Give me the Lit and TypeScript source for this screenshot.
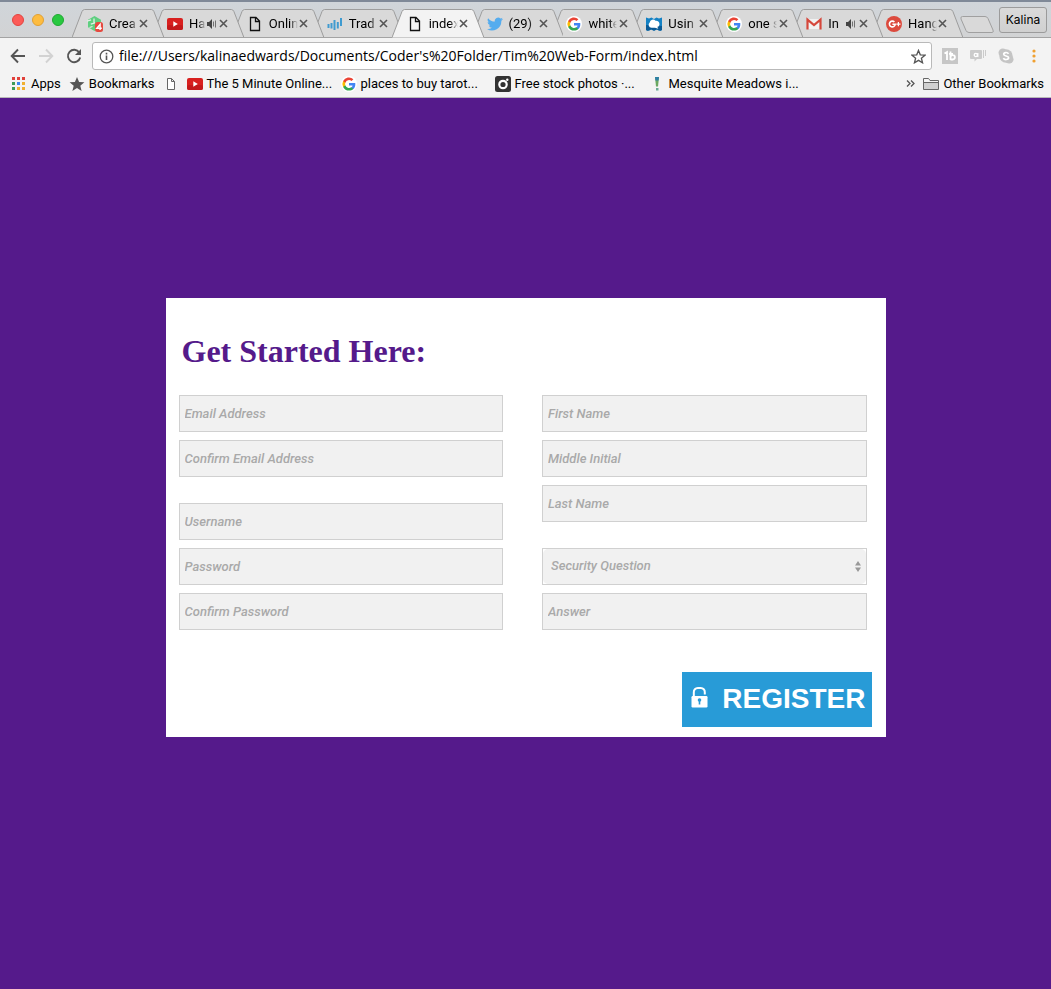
import { LitElement, html, css, svg, nothing, TemplateResult } from "lit";
import { customElement, property } from "lit/decorators.js";
import { classMap } from "lit/directives/class-map.js";

const google = svg`
  <circle cx="8" cy="8" r="8" fill="#fff"/>
  <g transform="translate(1.4 1.4) scale(.55)">
    <path fill="#4285f4" d="M23.5 12.3c0-.8-.1-1.6-.2-2.3H12v4.500h6.500a5.500 5.500 0 0 1-2.400 3.600v3h3.900c2.200-2.100 3.500-5.100 3.500-8.800z"/>
    <path fill="#34a853" d="M12 24c3.200 0 6-1.100 7.900-2.900l-3.900-3a7.200 7.200 0 0 1-10.700-3.800h-4v3.100A12 12 0 0 0 12 24z"/>
    <path fill="#fbbc05" d="M5.300 14.300a7.200 7.200 0 0 1 0-4.600V6.600h-4a12 12 0 0 0 0 10.800z"/>
    <path fill="#ea4335" d="M12 4.800c1.800 0 3.300.6 4.600 1.800L20 3.200A12 12 0 0 0 1.300 6.600l4 3.100A7.200 7.200 0 0 1 12 4.800z"/>
  </g>`;

const page = svg`<path d="M3.500 1.500h5.500l3.500 3.500v9.500h-9z M8.500 1.500v4h4" fill="none" stroke="#111" stroke-width="1.300"/>`;

const icons: Record<string, TemplateResult<2>> = {
  google,
  page,
  pageSmall: svg`<path d="M4.500 2.500h4l3 3v8h-7z M8.500 2.500v3h3" fill="#fff" stroke="#666"/>`,
  youtube: svg`<rect y="2" width="16" height="12" rx="2" fill="#d8201f"/><rect y="9" width="16" height="5" rx="2" fill="#c4191b"/><path d="M6.300 5.300v5.400L10.800 8z" fill="#fff"/>`,
  treehouse: svg`
    <path d="M7.500 0L14 3.700v7.600L7.500 15 1 11.300V3.700z" fill="#5fcf80"/>
    <path d="M0 5.200l4-1.400M3.800 8.200L8 6.800M2.500 11.500l3-1M7 2.500v4" fill="none" stroke="#e4efe6" stroke-width="1.300"/>
    <rect x="8" y="6" width="8" height="10" rx="2.500" fill="#e5493f"/>
    <path d="M13.100 14V8.300L9.800 12.200h5" fill="none" stroke="#fff" stroke-width="1.400"/>`,
  bars: svg`<path d="M1.500 8v4M4.500 7v5.500M7.500 4v10M10.800 6v6.500M14 2v8" stroke="#3f9bd0" stroke-width="2"/>`,
  twitter: svg`<g transform="scale(.6667)"><path fill="#55acee" d="M24 4.600a10 10 0 0 1-2.800.8 5 5 0 0 0 2.100-2.700 10 10 0 0 1-3.100 1.200 4.900 4.900 0 0 0-8.400 4.500A14 14 0 0 1 1.700 3.200a4.900 4.900 0 0 0 1.500 6.500 5 5 0 0 1-2.200-.6 4.900 4.900 0 0 0 3.900 4.900 5 5 0 0 1-2.200.1 4.900 4.900 0 0 0 4.600 3.400A10 10 0 0 1 0 19.500a14 14 0 0 0 21.500-12.400A10 10 0 0 0 24 4.600z"/></g>`,
  cloud: svg`
    <path d="M0 1.500l3 1 2.500-1L8 3l2.500-1.500 2.500 1 3-1V14c-2 1.500-4 0-5-.5s-1.500 1-3 1-2-1.500-3-1-3 2-5 .5z" fill="#1481c4"/>
    <path d="M0 9l16 1v4c-2 1.500-4 0-5-.5s-1.500 1-3 1-2-1.500-3-1-3 2-5 .5z" fill="#0a5a96"/>
    <path d="M5.500 11.800a3 3 0 0 1-1.800-5.300A3.300 3.300 0 0 1 9.500 4.800a3.300 3.300 0 0 1 4 3.400c0 1.500-1 2.600-2.200 2.600l1 2-3.300-1z" fill="#fff"/>`,
  gmail: svg`<path d="M2 3h12v10H2z" fill="#f1f1f1"/><path d="M1.500 13.500V3.600L8 9l6.500-5.400v9.900" fill="none" stroke="#d5473b" stroke-width="2.200"/>`,
  gplus: svg`
    <circle cx="8" cy="8" r="8" fill="#dc4a3d"/>
    <path d="M8.400 6A2.900 2.900 0 1 0 9.200 8.200H6.400" fill="none" stroke="#fff" stroke-width="1.600"/>
    <path d="M12.400 6v4.200M10.300 8.100h4.200" stroke="#fff" stroke-width="1.200"/>`,
  apps: svg`
    <path d="M1 1h3v3H1zM6 1h3v3H6zM11 1h3v3h-3z" fill="#e0413a"/>
    <path d="M1 6h3v3H1z" fill="#3c9b57"/><path d="M6 6h3v3H6z" fill="#3b86f0"/><path d="M11 6h3v3h-3z" fill="#f0b030"/>
    <path d="M1 11h3v3H1z" fill="#3c9b57"/><path d="M6 11h3v3H6zM11 11h3v3h-3z" fill="#f0b030"/>`,
  star: svg`<path d="M8 1l2.100 4.900 5.300.4-4.100 3.400 1.300 5.200L8 12.100 3.400 14.900l1.300-5.200L.6 6.300l5.300-.4z" fill="#555"/>`,
  instagram: svg`
    <rect width="16" height="16" rx="2.500" fill="#333"/>
    <circle cx="8" cy="8.500" r="3.700" fill="none" stroke="#fff" stroke-width="2.200"/>
    <circle cx="12.300" cy="3.800" r="1.200" fill="#fff"/>`,
  bang: svg`
    <path d="M6 1h4L9 10.500H7z" fill="#6aa860"/><path d="M6 1h4l-.4 3.500H6.400z" fill="#2d7fa5"/>
    <path d="M7 12h2.500v2.500H7z" fill="#6aab96"/>`,
  folder: svg`<path d="M.5 13.500v-11h5l1.500 2h8.500v9z" fill="#d0d0d0" stroke="#666"/><path d="M.5 6.500h15" stroke="#666"/><path d="M1 3h4.300l1.400 2H15v1H1z" fill="#f4f4f4"/>`,
  tb: svg`<rect width="16" height="16" fill="#c6c6c6"/><path d="M2.500 5.500L5 4v8M8.500 3.500V12M8.500 9.200a2.200 2.200 0 1 1 2.200 2.300H8.500M7 5.800h4" fill="none" stroke="#fff" stroke-width="1.800"/>`,
  chat: svg`
    <path d="M1 2h10a1 1 0 0 1 1 1v7a1 1 0 0 1-1 1H7l-2.500 2.500V11H1a1 1 0 0 1-1-1V3a1 1 0 0 1 1-1z" fill="#cbcbcb"/>
    <path d="M13.500 2v8M15.500 2v6" stroke="#cbcbcb"/>
    <circle cx="5.800" cy="7" r="1.600" fill="none" stroke="#fff" stroke-width="1.300"/><path d="M7.800 5v4" stroke="#fff" stroke-width="1.300"/>`,
  skype: svg`
    <circle cx="8" cy="8" r="6.700" fill="#c4c4c4"/><circle cx="4.800" cy="4.800" r="4.300" fill="#c4c4c4"/><circle cx="11.200" cy="11.200" r="4.300" fill="#c4c4c4"/>
    <path d="M10.500 5.800C9.500 3.900 5.700 4.200 5.700 6.200c0 2.200 4.900 1.300 4.900 3.600 0 2.100-4.200 2.400-5.200.3" fill="none" stroke="#fff" stroke-width="1.700"/>`,
};

const icon = (name: string) =>
  html`<svg class="icon" width="16" height="16" viewBox="0 0 16 16" aria-hidden="true">${icons[name]}</svg>`;

interface Tab { icon: string; title: string; audio?: boolean; active?: boolean; }
interface Field { label: string; type: "text" | "email" | "password" | "select"; }

const tabs: Tab[] = [
  { icon: "treehouse", title: "Crea" },
  { icon: "youtube", title: "Ha", audio: true },
  { icon: "page", title: "Onlin" },
  { icon: "bars", title: "Trad" },
  { icon: "page", title: "index", active: true },
  { icon: "twitter", title: "(29)" },
  { icon: "google", title: "white" },
  { icon: "cloud", title: "Usin" },
  { icon: "google", title: "one s" },
  { icon: "gmail", title: "In", audio: true },
  { icon: "gplus", title: "Hang" },
];

const bookmarks = [
  { icon: "apps", label: "Apps" },
  { icon: "star", label: "Bookmarks" },
  { icon: "pageSmall", label: "" },
  { icon: "youtube", label: "The 5 Minute Online...", wide: true },
  { icon: "google", label: "places to buy tarot...", wide: true },
  { icon: "instagram", label: "Free stock photos ·...", wide: true },
  { icon: "bang", label: "Mesquite Meadows i...", wide: true },
];

const columns: Field[][][] = [
  [
    [{ label: "Email Address", type: "email" }, { label: "Confirm Email Address", type: "email" }],
    [
      { label: "Username", type: "text" },
      { label: "Password", type: "password" },
      { label: "Confirm Password", type: "password" },
    ],
  ],
  [
    [
      { label: "First Name", type: "text" },
      { label: "Middle Initial", type: "text" },
      { label: "Last Name", type: "text" },
    ],
    [{ label: "Security Question", type: "select" }, { label: "Answer", type: "text" }],
  ],
];

const reset = css`
  * { box-sizing: border-box; }
  button { margin: 0; padding: 0; border: 0; background: none; font: inherit; color: inherit; cursor: pointer; }
  a { color: inherit; text-decoration: none; }
  svg { display: block; flex: none; }
`;

@customElement("browser-tabs")
export class BrowserTabs extends LitElement {
  @property({ attribute: false }) items: Tab[] = [];

  static styles = [reset, css`
    :host {
      display: flex;
      height: 38px;
      border-top: 2px solid #7f8998;
      background: linear-gradient(#d0d5da, #d2d3d4);
      box-shadow: inset 0 -1px #a3a3a3;
      font: 12px/16px Roboto, sans-serif;
      color: #000;
    }
    .lights { display: flex; gap: 8px; padding: 12px 8px 0 12px; }
    .light { width: 12px; height: 12px; border-radius: 50%; }
    .close { background: #fc5b57; border: 1px solid #e2443f; }
    .minimise { background: #fdbc40; border: 1px solid #e0a035; }
    .zoom { background: #28c840; border: 1px solid #1fa832; }
    .tabs { display: flex; flex: 0 1 879px; min-width: 0; padding-top: 7px; }
    .tab { position: relative; flex: 1 1 0; min-width: 0; height: 29px; }
    .shape { position: absolute; top: 0; left: 0; width: calc(100% + 12px); height: 29px; }
    .fill { fill: #d9d9d9; stroke: #9d9d9d; }
    .active .fill { fill: #f3f3f3; }
    .content { position: relative; display: flex; align-items: center; height: 29px; padding-left: 15px; }
    .select { display: flex; flex: 1; min-width: 0; align-items: center; text-align: left; }
    .title {
      flex: 1;
      margin-left: 6px;
      overflow: hidden;
      white-space: nowrap;
      font-size: 13px;
      mask-image: linear-gradient(to right, #000 calc(100% - 8px), transparent);
    }
    .dismiss { width: 12px; height: 12px; display: grid; place-items: center; margin-right: 2px; }
    .new { margin: 0 5px 0 9px; padding-top: 14px; align-self: flex-start; }
    .profile {
      width: 48px;
      height: 26px;
      margin: 5px 4px 0 auto;
      flex: none;
      border: 1px solid #9b9b9b;
      border-radius: 3px;
      background: linear-gradient(#dadada, #d0d0d0);
      font: 12px/16px Inter, sans-serif;
    }
  `];

  render() {
    return html`
      <div class="lights">
        <button class="light close" aria-label="Close window"></button>
        <button class="light minimise" aria-label="Minimise window"></button>
        <button class="light zoom" aria-label="Zoom window"></button>
      </div>
      <div class="tabs">
        ${this.items.map((t, i) => html`
          <div class=${classMap({ tab: true, active: !!t.active })} style="z-index:${t.active ? 20 : 12 - i}">
            <svg class="shape" viewBox="0 0 92 29" preserveAspectRatio="none" aria-hidden="true">
              <path class="fill" d="M0 28.5L10 2.500Q11 .5 12.500 .5H79.500Q81 .5 82 2.500L92 28.500" />
              ${t.active ? nothing : svg`<path d="M0 28.500H92" stroke="#a3a3a3"/>`}
            </svg>
            <div class="content">
              <button class="select">
                ${icon(t.icon)}
                <span class="title">${t.title}</span>
                ${t.audio ? html`
                  <svg width="12" height="12" viewBox="0 0 12 12" aria-hidden="true">
                    <path d="M1 4h2l3-3v10L3 8H1z" fill="#444"/>
                    <path d="M7.500 3.500v5M9.500 2.500v7" stroke="#666" stroke-width=".9"/>
                  </svg>` : nothing}
              </button>
              <button class="dismiss" aria-label="Close tab">
                <svg width="9" height="9" viewBox="0 0 9 9"><path d="M1 1l7 7M8 1L1 8" stroke="#555" stroke-width="1.600"/></svg>
              </button>
            </div>
          </div>`)}
      </div>
      <button class="new" aria-label="New tab">
        <svg width="34" height="17" viewBox="0 0 34 17">
          <path d="M2.500 .5H25q2 0 3 2l5 11.500q1 2.500-1 2.500H9q-2 0-3-2L1 3Q.3.5 2.500.5z" fill="#d9d9d9" stroke="#a0a0a0"/>
        </svg>
      </button>
      <button class="profile">Kalina</button>`;
  }
}

@customElement("browser-toolbar")
export class BrowserToolbar extends LitElement {
  static styles = [reset, css`
    :host { display: block; background: #f3f3f3; border-bottom: 1px solid #b8b8b8; color: #000; }
    .bar { display: flex; align-items: center; height: 36px; padding: 0 9px 0 10px; gap: 12px; }
    .address {
      display: flex;
      flex: 1;
      min-width: 0;
      align-items: center;
      gap: 5px;
      height: 28px;
      margin: 0 -2px;
      padding: 0 5px 0 6px;
      background: #fff;
      border: 1px solid #b9b9b9;
      border-radius: 3px;
    }
    .url {
      flex: 1;
      min-width: 0;
      padding: 0;
      border: 0;
      outline: 0;
      background: none;
      font: 14px/20px "Open Sans", sans-serif;
      color: #000;
    }
    .bookmarks {
      display: flex;
      align-items: center;
      gap: 8px;
      height: 23px;
      padding: 0 7px 4px 11px;
      font: 13px/16px Roboto, sans-serif;
      white-space: nowrap;
    }
    .bookmark { display: flex; align-items: center; gap: 4px; }
    .wide { width: 146px; flex: 0 1 auto; min-width: 0; }
    .more { margin-left: auto; }
  `];

  render() {
    return html`
      <div class="bar">
        <button aria-label="Back">
          <svg width="16" height="16" viewBox="0 0 16 16"><path d="M15 8H2M8 1.500L1.700 8 8 14.500" fill="none" stroke="#555" stroke-width="1.900"/></svg>
        </button>
        <button aria-label="Forward">
          <svg width="16" height="16" viewBox="0 0 16 16"><path d="M1 8h13M8 1.500L14.300 8 8 14.500" fill="none" stroke="#d2d2d2" stroke-width="1.900"/></svg>
        </button>
        <button aria-label="Reload">
          <svg width="16" height="16" viewBox="0 0 16 16"><path d="M13.300 4.500A6.200 6.200 0 1 0 14.200 9.500" fill="none" stroke="#555" stroke-width="1.900"/><path d="M15 1v6H9z" fill="#555"/></svg>
        </button>
        <div class="address">
          <svg width="15" height="15" viewBox="0 0 15 15" aria-hidden="true">
            <circle cx="7.500" cy="7.500" r="6.300" fill="none" stroke="#555" stroke-width="1.300"/>
            <path d="M7.500 6.500V11M7.500 3.800v1.600" stroke="#555" stroke-width="1.600"/>
          </svg>
          <input class="url" aria-label="Address" spellcheck="false"
            value="file:///Users/kalinaedwards/Documents/Coder's%20Folder/Tim%20Web-Form/index.html" />
          <button aria-label="Bookmark this page">
            <svg width="15" height="15" viewBox="0 0 16 16"><path d="M8 1.500l1.900 4.700 5 .4-3.800 3.200 1.200 4.900L8 12.100l-4.300 2.600 1.200-4.900L1.100 6.600l5-.4z" fill="none" stroke="#555" stroke-width="1.400"/></svg>
          </button>
        </div>
        <button aria-label="Tube extension">${icon("tb")}</button>
        <button aria-label="Chat extension">${icon("chat")}</button>
        <button aria-label="Skype">${icon("skype")}</button>
        <button aria-label="Menu">
          <svg width="16" height="16" viewBox="0 0 16 16"><g fill="#f0a030"><circle cx="8" cy="3" r="1.600"/><circle cx="8" cy="8" r="1.600"/><circle cx="8" cy="13" r="1.600"/></g></svg>
        </button>
      </div>
      <nav class="bookmarks">
        ${bookmarks.map((b) => html`
          <a class=${classMap({ bookmark: true, wide: !!b.wide })} href="#" aria-label=${b.label || "Page"}>
            ${icon(b.icon)}${b.label ? html`<span>${b.label}</span>` : nothing}
          </a>`)}
        <button class="more" aria-label="More bookmarks">
          <svg width="9" height="7" viewBox="0 0 9 7"><path d="M1 .5l3 3-3 3M5 .5l3 3-3 3" fill="none" stroke="#555" stroke-width="1.300"/></svg>
        </button>
        <a class="bookmark" href="#">${icon("folder")}<span>Other Bookmarks</span></a>
      </nav>`;
  }
}

@customElement("register-form")
export class RegisterForm extends LitElement {
  static styles = [reset, css`
    :host { display: block; }
    .card { padding: 35px 14px 10px 13px; background: #fff; }
    .heading { margin: 0 0 26px; padding-left: 3px; font: bold 32px/36px "Liberation Serif", serif; color: #551a8b; }
    .columns { display: grid; grid-template-columns: 1fr 1fr; column-gap: 39px; margin-right: 5px; }
    .column { display: flex; flex-direction: column; gap: 26px; }
    .group { display: flex; flex-direction: column; gap: 8px; }
    .field {
      width: 100%;
      height: 37px;
      padding: 0 5px;
      border: 1px solid #d0d0d0;
      border-radius: 0;
      background: #f1f1f1;
      font: italic 500 13px/16px Roboto, sans-serif;
      color: #a9a9a9;
    }
    .field::placeholder { color: #a9a9a9; opacity: 1; }
    .picker { position: relative; height: 37px; border: 1px solid #d0d0d0; background: #fff; }
    .picker .field { height: 35px; padding: 0 8px 1px; border: 0; border-radius: 5px; appearance: none; display: block; }
    .arrows { position: absolute; right: 5px; top: 12px; pointer-events: none; }
    .actions { display: flex; justify-content: flex-end; margin-top: 42px; }
    .register {
      display: flex;
      align-items: center;
      gap: 14px;
      height: 55px;
      padding: 0 6px 2px 9px;
      background: #289bd7;
      color: #fff;
      font: bold 28px/32px "Liberation Sans", sans-serif;
    }
    .lock { margin-bottom: 4px; }
  `];

  private field(f: Field) {
    if (f.type === "select") {
      return html`
        <div class="picker">
          <select class="field" aria-label=${f.label}><option>${f.label}</option></select>
          <svg class="arrows" width="6" height="11" viewBox="0 0 6 11" aria-hidden="true">
            <path d="M0 4.500L3 0l3 4.500zM0 6.500L3 11l3-4.500z" fill="#999"/>
          </svg>
        </div>`;
    }
    return html`<input class="field" type=${f.type} placeholder=${f.label} aria-label=${f.label} />`;
  }

  render() {
    return html`
      <form class="card" @submit=${(e: Event) => e.preventDefault()}>
        <h1 class="heading">Get Started Here:</h1>
        <div class="columns">
          ${columns.map((groups) => html`
            <div class="column">
              ${groups.map((g) => html`<div class="group">${g.map((f) => this.field(f))}</div>`)}
            </div>`)}
        </div>
        <div class="actions">
          <button class="register" type="submit">
            <svg class="lock" width="17" height="22" viewBox="0 0 17 22" aria-hidden="true">
              <path d="M2.800 11V6.300a4 4 0 0 1 4-4.300h3a4 4 0 0 1 4 4.300V8.500" fill="none" stroke="#fff" stroke-width="2"/>
              <rect x=".5" y="10" width="16" height="11.500" rx="1.200" fill="#fff"/>
              <circle cx="8.500" cy="14" r="1.800" fill="#289bd7"/><path d="M7.700 14h1.600v4.500H7.700z" fill="#289bd7"/>
            </svg>
            <span>REGISTER</span>
          </button>
        </div>
      </form>`;
  }
}

@customElement("app-root")
export class AppRoot extends LitElement {
  static styles = [reset, css`
    :host { display: flex; flex-direction: column; min-height: 100vh; background: #551a8b; }
    .page { flex: 1; padding: 200px 16px 40px; }
    .form { max-width: 720px; margin: 0 auto; }
  `];

  render() {
    return html`
      <browser-tabs .items=${tabs}></browser-tabs>
      <browser-toolbar></browser-toolbar>
      <main class="page"><register-form class="form"></register-form></main>`;
  }
}
